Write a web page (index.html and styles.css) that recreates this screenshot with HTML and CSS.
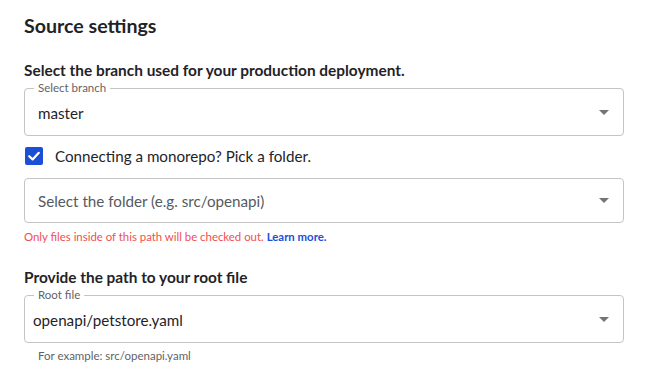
FILE: index.html
```html
<!DOCTYPE html>
<html>
<head>
<meta charset="utf-8">
<link rel="stylesheet" href="styles.css">
</head>
<body>
<div class="page">
  <h1 class="title">Source settings</h1>

  <section class="group g1">
    <h2 class="label">Select the branch used for your production deployment.</h2>
    <fieldset class="field">
      <legend class="legend">Select branch</legend>
      <div class="row">
        <span class="value">master</span>
        <span class="caret"></span>
      </div>
    </fieldset>
  </section>

  <label class="check">
    <span class="box">
      <svg width="18" height="18" viewBox="0 0 18 18"><path d="M4.2 9.2 L7.6 12.4 L13.8 5.8" fill="none" stroke="#fff" stroke-width="2.2" stroke-linecap="round" stroke-linejoin="round"/></svg>
    </span>
    <span class="check-text">Connecting a monorepo? Pick a folder.</span>
  </label>

  <div class="plain-field">
    <span class="placeholder">Select the folder (e.g. src/openapi)</span>
    <span class="caret"></span>
  </div>
  <p class="error">Only files inside of this path will be checked out. <a class="link">Learn more.</a></p>

  <section class="group g3">
    <h2 class="label">Provide the path to your root file</h2>
    <fieldset class="field">
      <legend class="legend">Root file</legend>
      <div class="row row-tight">
        <span class="value">openapi/petstore.yaml</span>
        <span class="caret"></span>
      </div>
    </fieldset>
    <p class="hint">For example: src/openapi.yaml</p>
  </section>
</div>
</body>
</html>
```

FILE: styles.css
```css
html, body {
  margin: 0;
  padding: 0;
  background: #fff;
}
body {
  font-family: "Lato", "Noto Sans", sans-serif;
  color: #1f2328;
}
.page {
  padding: 12px 26px 0 24px;
}
.title {
  margin: 0;
  font-size: 19.6px;
  line-height: 28px;
  font-weight: 700;
}
.group { margin: 0; }
.g1 { margin-top: 20px; }
.label {
  margin: 0;
  font-size: 15.4px;
  line-height: 20px;
  font-weight: 700;
}
.field {
  margin: 2px 0 0 0;
  padding: 0;
  border: 1px solid #c4c4c4;
  border-radius: 4px;
  min-width: 0;
}
.legend {
  margin-left: 9px;
  padding: 0 4px;
  font-size: 11.5px;
  line-height: 12px;
  color: #5f6368;
}
.row {
  box-sizing: border-box;
  display: flex;
  align-items: center;
  justify-content: space-between;
  height: 41px;
  padding: 0 14px 4px 13px;
}
.row-tight { padding-left: 8px; }
.value {
  font-size: 15.2px;
  color: #1f2328;
}
.caret {
  width: 0;
  height: 0;
  border-left: 5px solid transparent;
  border-right: 5px solid transparent;
  border-top: 5px solid #757575;
}
.check {
  display: flex;
  align-items: center;
  gap: 12px;
  margin: 10px 0 0 1px;
  height: 20px;
}
.box {
  width: 18px;
  height: 18px;
  border-radius: 2px;
  background: #1a4fd6;
  display: flex;
}
.check-text {
  font-size: 15.2px;
}
.plain-field {
  margin-top: 12px;
  height: 43px;
  border: 1px solid #c4c4c4;
  border-radius: 4px;
  display: flex;
  align-items: center;
  justify-content: space-between;
  padding: 0 14px 0 13px;
}
.placeholder {
  font-size: 15.2px;
  color: #555a60;
}
.error {
  margin: 6px 0 0 0;
  font-size: 11.4px;
  line-height: 16px;
  color: #ef4f4f;
}
.link {
  color: #1d4fd8;
  font-weight: 700;
}
.g3 { margin-top: 22px; }
.hint {
  margin: 6px 0 0 14px;
  font-size: 11.5px;
  line-height: 14px;
  color: #5f6368;
}
```
